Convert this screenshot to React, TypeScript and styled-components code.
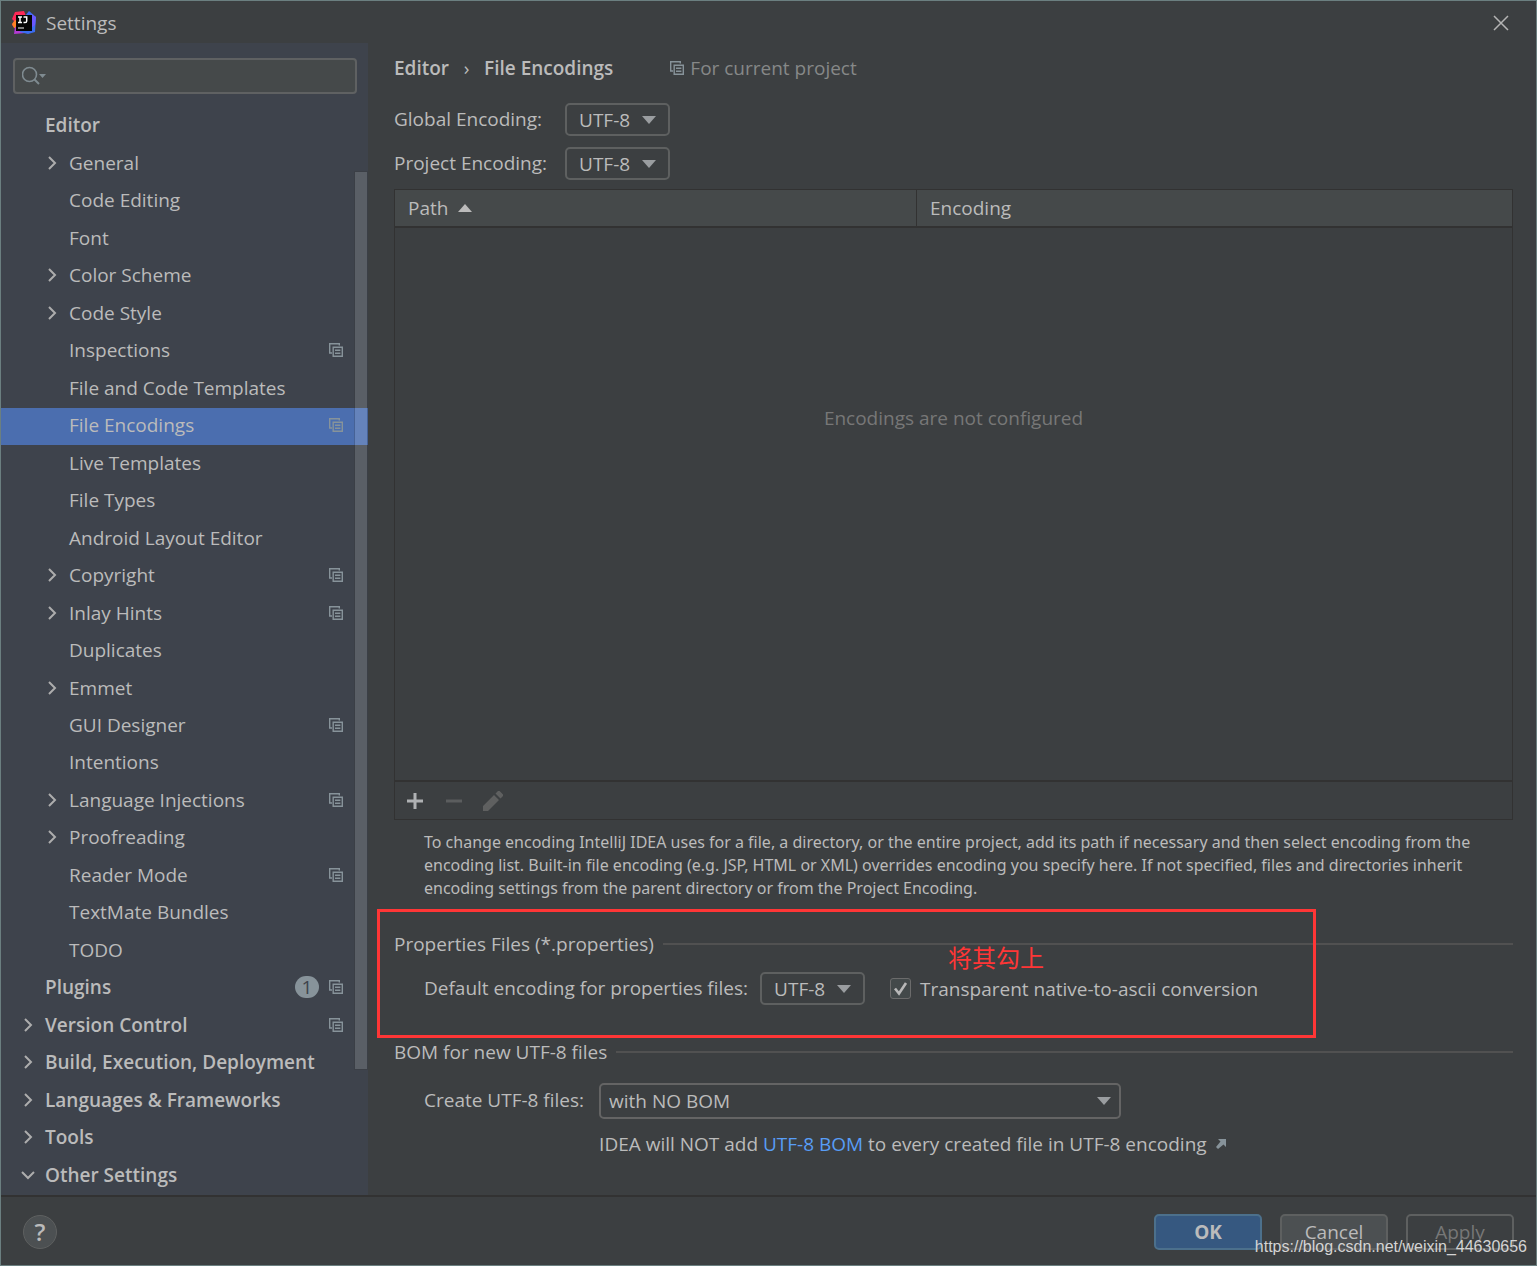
import React, { useState } from "react";
import styled, { createGlobalStyle, css } from "styled-components";

const color = {
  window: "#3c3f41",
  sidebar: "#3e434c",
  selection: "#4b6eaf",
  text: "#bbbbbb",
  muted: "#868888",
  disabled: "#777777",
  line: "#323232",
  separator: "#515151",
  control: "#646464",
  field: "#45494a",
  icon: "#87939a",
  arrow: "#9a9da0",
  link: "#589df6",
  mark: "#ff3636",
};

const GlobalStyle = createGlobalStyle`
  *, *::before, *::after { box-sizing: border-box; }
  body {
    margin: 0;
    background: ${color.window};
    color: ${color.text};
    font: 19px/24px "Open Sans", "Noto Sans", "Noto Sans CJK SC", sans-serif;
  }
  button, input, select { font: inherit; color: inherit; }
  svg { display: block; flex: none; }
`;

const Window = styled.div`
  position: relative;
  display: flex;
  flex-direction: column;
  min-height: 100vh;
  border: 1px solid #6b7f80;
`;

const TitleBar = styled.header`
  display: flex;
  align-items: center;
  gap: 10px;
  height: 42px;
  padding: 2px 27px 0 11px;
`;

const Title = styled.h1`
  flex: 1;
  margin: 0;
  font-size: 19px;
  font-weight: 400;
`;

const BareButton = styled.button`
  display: flex;
  align-items: center;
  gap: 10px;
  padding: 0;
  border: 0;
  background: none;
  text-align: left;
`;

const Body = styled.div`
  flex: 1;
  display: grid;
  grid-template-columns: 367px minmax(0, 1fr);
`;

const Sidebar = styled.aside`
  position: relative;
  display: flex;
  flex-direction: column;
  gap: 14px;
  padding-top: 15px;
  background: ${color.sidebar};
`;

const SearchBox = styled.label`
  display: flex;
  align-items: center;
  height: 36px;
  margin: 0 11px 0 12px;
  padding: 0 7px;
  border: 2px solid #5f6162;
  border-radius: 4px;
  background: ${color.field};
`;

const SearchInput = styled.input`
  flex: 1;
  min-width: 0;
  border: 0;
  outline: 0;
  background: none;
`;

const Tree = styled.nav`
  flex: 1;
  display: flex;
  flex-direction: column;
`;

const TreeRow = styled.button<{ $top?: boolean; $selected?: boolean }>`
  flex: 1;
  display: flex;
  align-items: center;
  gap: 10px;
  padding: 0 25px 3px ${(p) => (p.$top ? 20 : 44)}px;
  border: 0;
  background: ${(p) => (p.$selected ? color.selection : "none")};
  font-weight: ${(p) => (p.$top ? 600 : 400)};
  text-align: left;
`;

const TreeLabel = styled.span`
  flex: 1;
`;

const Badge = styled.span`
  width: 24px;
  border-radius: 12px;
  background: ${color.icon};
  color: ${color.sidebar};
  font-weight: 400;
  line-height: 22px;
  text-align: center;
`;

const ScrollThumb = styled.div`
  position: absolute;
  top: 128px;
  right: 0;
  bottom: 125px;
  width: 14px;
  border: 1px solid rgba(50, 50, 50, 0.2);
  background: rgba(255, 255, 255, 0.15);
  background-clip: padding-box;
`;

const Content = styled.main`
  display: flex;
  flex-direction: column;
  padding: 13px 23px 39px 26px;
`;

const Breadcrumb = styled.div`
  display: flex;
  align-items: center;
  height: 24px;
  margin-bottom: 23px;
`;

const Crumb = styled.h2`
  margin: 0;
  font-size: 19px;
  font-weight: 600;
`;

const CrumbMark = styled.span`
  width: 35px;
  text-align: center;
`;

const Scope = styled.span`
  display: flex;
  align-items: center;
  gap: 6px;
  margin-left: 57px;
  color: ${color.muted};
`;

const FieldLabel = styled.label`
  padding-bottom: 2px;
  white-space: nowrap;
`;

const EncodingForm = styled.div`
  display: grid;
  grid-template-columns: max-content max-content;
  gap: 11px 18px;
  align-items: center;
  margin-bottom: 9px;
`;

const Combo = styled.span<{ $wide?: boolean }>`
  display: grid;
  align-items: center;
  width: ${(p) => (p.$wide ? "522px" : "105px")};
  max-width: 100%;

  select, svg { grid-area: 1 / 1; }
  svg {
    justify-self: end;
    margin-right: ${(p) => (p.$wide ? 10 : 14)}px;
    pointer-events: none;
  }
`;

const Select = styled.select<{ $wide?: boolean }>`
  appearance: none;
  width: 100%;
  height: ${(p) => (p.$wide ? 36 : 33)}px;
  padding: 0 ${(p) => (p.$wide ? 8 : 12)}px;
  border: 2px solid ${(p) => (p.$wide ? color.control : "#5e6060")};
  border-radius: 5px;
  background: ${color.window};
`;

const TablePanel = styled.section`
  flex: 1;
  display: flex;
  flex-direction: column;
  border: 1px solid ${color.line};
`;

const TableArea = styled.div`
  flex: 1;
  display: grid;
`;

const Table = styled.table`
  width: 100%;
  height: 100%;
  border-collapse: separate;
  border-spacing: 0;
  table-layout: fixed;
`;

const HeadCell = styled.th<{ $width?: string }>`
  width: ${(p) => p.$width ?? "auto"};
  height: 38px;
  padding: 0 13px;
  border-bottom: 2px solid ${color.line};
  background: ${color.field};
  font-weight: 400;
  text-align: left;

  & + & { border-left: 1px solid ${color.line}; }
`;

const EmptyCell = styled.td`
  padding: 0 0 172px;
  color: ${color.disabled};
  text-align: center;
`;

const Toolbar = styled.div`
  display: flex;
  align-items: center;
  gap: 19px;
  height: 39px;
  padding-left: 10px;
  border-top: 2px solid ${color.line};
`;

const Hint = styled.p`
  margin: 11px 0 32px 30px;
  font-family: "Noto Sans", "Open Sans", sans-serif;
  font-size: 16px;
  line-height: 23px;
`;

const Section = styled.section`
  position: relative;
  display: flex;
  flex-direction: column;
`;

const SectionTitle = styled.h3`
  display: flex;
  align-items: center;
  gap: 9px;
  margin: 0;
  font-size: 19px;
  font-weight: 400;

  &::after {
    content: "";
    flex: 1;
    height: 2px;
    background: ${color.separator};
  }
`;

const PropertiesRow = styled.div`
  display: flex;
  align-items: center;
  gap: 12px;
  padding: 16px 0 35px 30px;
`;

const CheckLabel = styled.label`
  display: flex;
  align-items: center;
  gap: 9px;
  margin-left: 13px;
`;

const CheckWrap = styled.span`
  display: grid;
  place-items: center;

  input, svg { grid-area: 1 / 1; }
  svg { pointer-events: none; }
  input:not(:checked) + svg { visibility: hidden; }
`;

const CheckInput = styled.input`
  appearance: none;
  width: 21px;
  height: 21px;
  margin: 0;
  border: 1px solid #6b6b6b;
  border-radius: 3px;
  background: #43494a;
`;

const MarkFrame = styled.div`
  position: absolute;
  top: -23px;
  left: -17px;
  width: 939px;
  height: 129px;
  border: 3px solid ${color.mark};
  pointer-events: none;
`;

const MarkText = styled.span`
  position: absolute;
  top: 8px;
  left: 554px;
  color: ${color.mark};
  font: 24px/34px "Noto Sans CJK SC", sans-serif;
`;

const BomForm = styled.div`
  display: grid;
  grid-template-columns: max-content minmax(0, 1fr);
  gap: 13px 15px;
  align-items: center;
  padding: 19px 0 0 30px;
`;

const Note = styled.p`
  grid-column: 2;
  display: flex;
  align-items: center;
  gap: 9px;
  margin: 0;
`;

const Link = styled.a`
  color: ${color.link};
  text-decoration: none;
`;

const Footer = styled.footer`
  display: flex;
  align-items: center;
  gap: 18px;
  height: 70px;
  padding: 2px 22px 0;
  border-top: 2px solid ${color.line};
`;

const HelpButton = styled.button`
  width: 34px;
  height: 34px;
  margin-right: auto;
  padding: 0;
  border: 1px solid #5e6060;
  border-radius: 50%;
  background: #4c5052;
  font-size: 24px;
  font-weight: 600;
`;

const ActionButton = styled.button<{ $kind?: "primary" | "disabled" }>`
  width: 108px;
  height: 36px;
  padding: 0;
  border: 2px solid #5e6060;
  border-radius: 5px;
  background: #4c5052;

  ${(p) =>
    p.$kind === "primary" &&
    css`
      border-color: #4c708c;
      background: #365880;
      font-weight: 700;
    `}
  ${(p) =>
    p.$kind === "disabled" &&
    css`
      background: none;
      color: ${color.disabled};
    `}
`;

const Watermark = styled.span`
  position: absolute;
  right: 9px;
  bottom: 6px;
  color: #d4d4d4;
  font: 16px/24px "Liberation Sans", sans-serif;
  pointer-events: none;
`;

const AppLogo = () => (
  <svg width="24" height="24" viewBox="0 0 24 24" aria-hidden="true">
    <path d="M3 1 12 0 14 5 6 20 0 14 2 10 0 8Z" fill="#fe2857" />
    <path d="M0 13 3 9 5 10 5 18 2 17Z" fill="#fd8224" />
    <path d="M3 16 7 17 13 22 2 23Z" fill="#b33ad4" />
    <path d="M17 0 24 6 23 21 16 23 8 21 13 5Z" fill="#3b6cf0" />
    <path d="M19 3 24 6 23 14 19 17Z" fill="#6b57ff" />
    <rect x="4" y="4" width="16" height="16" fill="#050505" />
    <path d="M6 6h4M8 6v5.5M6 11.500h4M11.500 6h3.200v4q0 1.600-1.600 1.600h-1.600" fill="none" stroke="#fff" strokeWidth="1.5" />
    <path d="M6 17h6" stroke="#b5b5b5" strokeWidth="1.4" />
  </svg>
);

const CloseIcon = () => (
  <svg width="16" height="16" viewBox="0 0 16 16" aria-hidden="true">
    <path d="m1 1 14 14M15 1 1 15" stroke="#b4b4b4" strokeWidth="1.5" />
  </svg>
);

const SearchIcon = () => (
  <svg width="25" height="20" viewBox="0 0 25 20" aria-hidden="true">
    <circle cx="7.5" cy="8.5" r="7" fill="none" stroke="#7f8b91" strokeWidth="1.6" />
    <path d="m12.5 13.5 4.5 4.5" stroke="#7f8b91" strokeWidth="2" />
    <path d="M17 8h7l-3.5 4Z" fill="#7f8b91" />
  </svg>
);

const ProjectIcon = () => (
  <svg width="14" height="14" viewBox="0 0 14 14" aria-hidden="true" fill="none" stroke={color.icon} strokeWidth="1.4">
    <path d="M3 10H.7V.7H10.3V2.6" />
    <path d="M4.2 4.2h9.1v9.1H4.2ZM6 7.3h5.4M6 10.2h5.4" />
  </svg>
);

const Chevron = ({ open }: { open?: boolean }) => (
  <svg width="14" height="14" viewBox="0 0 14 14" aria-hidden="true" fill="none" stroke="#adadad" strokeWidth="2">
    <path d={open ? "m1 4 6 6 6-6" : "m4 1 6 6-6 6"} />
  </svg>
);

const Triangle = ({ up }: { up?: boolean }) => (
  <svg width="14" height="8" viewBox="0 0 14 8" aria-hidden="true">
    <path d={up ? "M0 8h14L7 0Z" : "M0 0h14L7 8Z"} fill={up ? color.text : color.arrow} />
  </svg>
);

const ToolIcon = ({ path, fill }: { path: string; fill: string }) => (
  <svg width="20" height="20" viewBox="0 0 20 20" aria-hidden="true">
    <path d={path} fill={fill} />
  </svg>
);

type Item = {
  label: string;
  top?: boolean;
  expandable?: boolean;
  open?: boolean;
  project?: boolean;
  badge?: number;
};

const items: Item[] = [
  { label: "Editor", top: true },
  { label: "General", expandable: true },
  { label: "Code Editing" },
  { label: "Font" },
  { label: "Color Scheme", expandable: true },
  { label: "Code Style", expandable: true },
  { label: "Inspections", project: true },
  { label: "File and Code Templates" },
  { label: "File Encodings", project: true },
  { label: "Live Templates" },
  { label: "File Types" },
  { label: "Android Layout Editor" },
  { label: "Copyright", expandable: true, project: true },
  { label: "Inlay Hints", expandable: true, project: true },
  { label: "Duplicates" },
  { label: "Emmet", expandable: true },
  { label: "GUI Designer", project: true },
  { label: "Intentions" },
  { label: "Language Injections", expandable: true, project: true },
  { label: "Proofreading", expandable: true },
  { label: "Reader Mode", project: true },
  { label: "TextMate Bundles" },
  { label: "TODO" },
  { label: "Plugins", top: true, badge: 1, project: true },
  { label: "Version Control", top: true, expandable: true, project: true },
  { label: "Build, Execution, Deployment", top: true, expandable: true },
  { label: "Languages & Frameworks", top: true, expandable: true },
  { label: "Tools", top: true, expandable: true },
  { label: "Other Settings", top: true, expandable: true, open: true },
];

const ChevronSlot = styled.span`
  width: 14px;
`;

const ComboBox = ({ id, value, wide }: { id: string; value: string; wide?: boolean }) => (
  <Combo $wide={wide}>
    <Select id={id} $wide={wide} defaultValue={value}>
      <option>{value}</option>
    </Select>
    <Triangle />
  </Combo>
);

export default function App() {
  const [selected, setSelected] = useState("File Encodings");

  return (
    <>
      <GlobalStyle />
      <Window>
        <TitleBar>
          <AppLogo />
          <Title>Settings</Title>
          <BareButton aria-label="Close">
            <CloseIcon />
          </BareButton>
        </TitleBar>

        <Body>
          <Sidebar>
            <SearchBox>
              <SearchIcon />
              <SearchInput type="text" aria-label="Search settings" />
            </SearchBox>
            <Tree>
              {items.map((item) => (
                <TreeRow
                  key={item.label}
                  $top={item.top}
                  $selected={item.label === selected}
                  onClick={() => setSelected(item.label)}
                >
                  <ChevronSlot>{item.expandable && <Chevron open={item.open} />}</ChevronSlot>
                  <TreeLabel>{item.label}</TreeLabel>
                  {item.badge && <Badge>{item.badge}</Badge>}
                  {item.project && <ProjectIcon />}
                </TreeRow>
              ))}
            </Tree>
            <ScrollThumb />
          </Sidebar>

          <Content>
            <Breadcrumb>
              <Crumb>Editor</Crumb>
              <CrumbMark>›</CrumbMark>
              <Crumb>File Encodings</Crumb>
              <Scope>
                <ProjectIcon />
                For current project
              </Scope>
            </Breadcrumb>

            <EncodingForm>
              <FieldLabel htmlFor="global">Global Encoding:</FieldLabel>
              <ComboBox id="global" value="UTF-8" />
              <FieldLabel htmlFor="project">Project Encoding:</FieldLabel>
              <ComboBox id="project" value="UTF-8" />
            </EncodingForm>

            <TablePanel>
              <TableArea>
                <Table>
                  <thead>
                    <tr>
                      <HeadCell $width="521px">
                        <BareButton>
                          Path <Triangle up />
                        </BareButton>
                      </HeadCell>
                      <HeadCell>Encoding</HeadCell>
                    </tr>
                  </thead>
                  <tbody>
                    <tr>
                      <EmptyCell colSpan={2}>Encodings are not configured</EmptyCell>
                    </tr>
                  </tbody>
                </Table>
              </TableArea>
              <Toolbar>
                <BareButton aria-label="Add">
                  <ToolIcon fill="#afb1b3" path="M8.5 2h3v6.5H18v3h-6.500V18h-3v-6.500H2v-3h6.500Z" />
                </BareButton>
                <BareButton aria-label="Remove" disabled>
                  <ToolIcon fill="#5b5d5e" path="M2 8.500h16v3H2Z" />
                </BareButton>
                <BareButton aria-label="Edit" disabled>
                  <ToolIcon fill="#5f6060" path="M0 20v-5L11 4l5 5L5 20ZM12.500 2.500 15 0q.8-.6 1.600 0L20 3.400q.6.8 0 1.600L17.500 7.500Z" />
                </BareButton>
              </Toolbar>
            </TablePanel>

            <Hint>
              To change encoding IntelliJ IDEA uses for a file, a directory, or the entire project, add its path if
              necessary and then select encoding from the encoding list. Built-in file encoding (e.g. JSP, HTML or XML)
              overrides encoding you specify here. If not specified, files and directories inherit encoding settings
              from the parent directory or from the Project Encoding.
            </Hint>

            <Section>
              <SectionTitle>Properties Files (*.properties)</SectionTitle>
              <PropertiesRow>
                <FieldLabel htmlFor="properties">Default encoding for properties files:</FieldLabel>
                <ComboBox id="properties" value="UTF-8" />
                <CheckLabel>
                  <CheckWrap>
                    <CheckInput type="checkbox" defaultChecked />
                    <svg width="15" height="15" viewBox="0 0 15 15" aria-hidden="true">
                      <path d="m2 7.500 4 5L13 2" fill="none" stroke="#b8b8b8" strokeWidth="2.600" />
                    </svg>
                  </CheckWrap>
                  Transparent native-to-ascii conversion
                </CheckLabel>
              </PropertiesRow>
              <MarkFrame />
              <MarkText>将其勾上</MarkText>
            </Section>

            <Section>
              <SectionTitle>BOM for new UTF-8 files</SectionTitle>
              <BomForm>
                <FieldLabel htmlFor="bom">Create UTF-8 files:</FieldLabel>
                <ComboBox id="bom" value="with NO BOM" wide />
                <Note>
                  <span>
                    IDEA will NOT add <Link href="#bom">UTF-8 BOM</Link> to every created file in UTF-8 encoding
                  </span>
                  <svg width="10" height="10" viewBox="0 0 10 10" aria-hidden="true">
                    <path d="M2 0h8v8L7.500 5.500 2 10 0 8l4.500-5.500Z" fill={color.icon} />
                  </svg>
                </Note>
              </BomForm>
            </Section>
          </Content>
        </Body>

        <Footer>
          <HelpButton aria-label="Help">?</HelpButton>
          <ActionButton $kind="primary">OK</ActionButton>
          <ActionButton>Cancel</ActionButton>
          <ActionButton $kind="disabled" disabled>
            Apply
          </ActionButton>
        </Footer>
        <Watermark>https://blog.csdn.net/weixin_44630656</Watermark>
      </Window>
    </>
  );
}
